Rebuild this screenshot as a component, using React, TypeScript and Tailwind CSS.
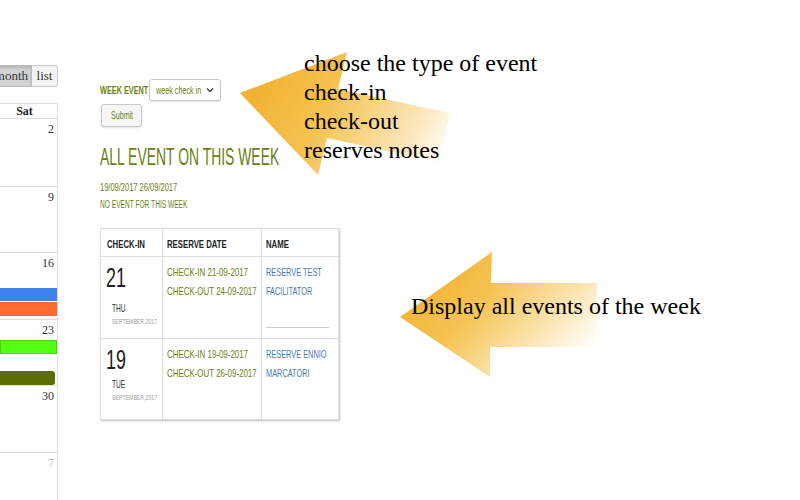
import React from "react";

function Sq({ w, s, children }: { w: string; s: string; children: React.ReactNode }) {
  return (
    <span className={`inline-block whitespace-nowrap ${w}`}>
      <span className={`inline-block origin-left ${s}`}>{children}</span>
    </span>
  );
}

function CalendarColumn() {
  const rows = [
    { n: "2", h: "h-[68px]" },
    { n: "9", h: "h-[66px]" },
    { n: "16", h: "h-[67px]" },
    { n: "23", h: "h-[66px]" },
    { n: "30", h: "h-[67px]" },
    { n: "7", h: "h-[67px]", muted: true },
  ];
  return (
    <div className="w-[58px] shrink-0 flex flex-col pt-[65px] font-['Liberation_Serif',serif]">
      <div className="flex h-[22px] -ml-[4px] text-[13px] text-[#333]">
        <div className="w-[36px] bg-[#d3d3d3] border border-[#bbb] flex items-center justify-end pr-[3px] shadow-[inset_0_2px_3px_rgba(0,0,0,0.15)]">month</div>
        <div className="w-[26px] bg-[#f3f3f3] border border-[#ccc] border-l-0 rounded-r-[3px] flex items-center justify-center">list</div>
      </div>
      <div className="mt-[16px] flex-1 border-r border-t border-[#ddd] flex flex-col">
        <div className="h-[15px] border-b border-[#ddd] text-[12px] font-bold text-[#222] flex items-center justify-center pr-[8px]">Sat</div>
        {rows.map((r, i) => (
          <div key={i} className={`${r.h} shrink-0 border-b border-[#ddd] flex flex-col`}>
            <div className={`text-right pr-[3px] pt-[3px] text-[12px] leading-[14px] ${r.muted ? "text-[#bbb]" : "text-[#333]"}`}>{r.n}</div>
            {i === 2 && (
              <div className="mt-[18px] flex flex-col gap-[1px]">
                <div className="h-[13px] bg-[#3f82ec]" />
                <div className="h-[14px] bg-[#ff6a30]" />
              </div>
            )}
            {i === 3 && (
              <div className="mt-[3px] flex flex-col">
                <div className="h-[14px] bg-[#52ff12] border border-[#49d40f]" />
                <div className="h-[17px]" />
                <div className="h-[14px] mr-[2px] bg-[#5a6f00] rounded-r-[3px]" />
              </div>
            )}
          </div>
        ))}
      </div>
    </div>
  );
}

function MiddlePanel() {
  const green = "text-[#6a7f12]";
  const rows = [
    { d: "21", w: "THU", ci: "21-09-2017", co: "24-09-2017", n1: "RESERVE TEST", n2: "FACILITATOR", h: "h-[82px]", line: true, wm: "mt-[10px]" },
    { d: "19", w: "TUE", ci: "19-09-2017", co: "26-09-2017", n1: "RESERVE ENNIO", n2: "MARCATORI", h: "h-[80px]", line: false, wm: "mt-[4px]" },
  ];
  return (
    <div className="ml-[42px] pt-[79px] flex flex-col font-['Liberation_Sans',sans-serif]">
      <div className="flex items-center gap-[1px]">
        <span className={`text-[10px] font-bold ${green}`}>
          <Sq w="w-[48px]" s="scale-x-[0.73]">WEEK EVENT</Sq>
        </span>
        <div className="w-[72px] h-[22px] border border-[#c8c8c8] rounded-[3px] shadow-[0_1px_2px_rgba(0,0,0,0.12)] flex items-center justify-between pl-[6px] pr-[6px]">
          <span className={`text-[10px] ${green}`}>
            <Sq w="w-[46px]" s="scale-x-[0.72]">week check in</Sq>
          </span>
          <svg width="8" height="6" viewBox="0 0 8 6"><path d="M1 1.5 L4 4.5 L7 1.5" fill="none" stroke="#444" strokeWidth="1.4" /></svg>
        </div>
      </div>
      <div className="mt-[3px] w-[41px] h-[23px] ml-[1px] border border-[#c8c8c8] rounded-[3px] bg-[#f6f6f6] shadow-[0_1px_2px_rgba(0,0,0,0.12)] flex items-center justify-center">
        <span className={`text-[10px] ${green}`}>
          <Sq w="w-[22px]" s="scale-x-[0.71]">Submit</Sq>
        </span>
      </div>
      <h1 className={`mt-[17px] text-[24px] leading-[26px] ${green}`}>
        <Sq w="w-[181px]" s="scale-x-[0.58]">ALL EVENT ON THIS WEEK</Sq>
      </h1>
      <div className={`mt-[9px] text-[10px] leading-[17px] ${green}`}>
        <div><Sq w="w-[77px]" s="scale-x-[0.75]">19/09/2017 26/09/2017</Sq></div>
        <div><Sq w="w-[88px]" s="scale-x-[0.66]">NO EVENT FOR THIS WEEK</Sq></div>
      </div>
      <div className="mt-[15px] w-[239px] border border-[#ddd] shadow-[1px_1px_2px_rgba(0,0,0,0.25)] flex flex-col">
        <div className="h-[28px] grid grid-cols-[62px_99px_1fr] border-b border-[#ddd] text-[10.5px] font-bold text-[#222]">
          <div className="pl-[6px] pt-[4px] flex items-center border-r border-[#ddd]"><Sq w="w-[38px]" s="scale-x-[0.74]">CHECK-IN</Sq></div>
          <div className="pl-[4px] pt-[4px] flex items-center border-r border-[#ddd]"><Sq w="w-[58px]" s="scale-x-[0.74]">RESERVE DATE</Sq></div>
          <div className="pl-[4px] pt-[4px] flex items-center"><Sq w="w-[24px]" s="scale-x-[0.74]">NAME</Sq></div>
        </div>
        {rows.map((r, i) => (
          <div key={i} className={`${r.h} grid grid-cols-[62px_99px_1fr] ${i === 0 ? "border-b border-[#ddd]" : ""}`}>
            <div className="border-r border-[#ddd] pl-[5px] pt-[7px] flex flex-col">
              <span className="text-[28px] leading-[28px] text-[#222]"><Sq w="w-[21px]" s="scale-x-[0.64]">{r.d}</Sq></span>
              <span className={`pl-[6px] ${r.wm} text-[11px] leading-[12px] text-[#333]`}><Sq w="w-[13px]" s="scale-x-[0.6]">{r.w}</Sq></span>
              <span className="pl-[6px] mt-[4px] text-[6.5px] leading-[8px] text-[#999]"><Sq w="w-[47px]" s="scale-x-[0.8]">SEPTEMBER,2017</Sq></span>
            </div>
            <div className={`border-r border-[#ddd] pl-[4px] pt-[6px] text-[11px] leading-[19px] ${green}`}>
              <div><Sq w="w-[81px]" s="scale-x-[0.72]">CHECK-IN {r.ci}</Sq></div>
              <div><Sq w="w-[89px]" s="scale-x-[0.72]">CHECK-OUT {r.co}</Sq></div>
            </div>
            <div className="pl-[4px] pt-[6px] flex flex-col text-[11px] leading-[19px] text-[#4a78b5]">
              <div><Sq w="w-[60px]" s="scale-x-[0.67]">{r.n1}</Sq></div>
              <div><Sq w="w-[50px]" s="scale-x-[0.67]">{r.n2}</Sq></div>
              {r.line && <div className="mt-auto mb-[10px] w-[63px] border-b border-[#ccc]" />}
            </div>
          </div>
        ))}
      </div>
    </div>
  );
}

export default function App() {
  return (
    <div className="relative w-[800px] h-[500px] bg-white overflow-hidden flex">
      <CalendarColumn />
      <MiddlePanel />
      <svg className="absolute inset-0 pointer-events-none" width="800" height="500" viewBox="0 0 800 500">
        <defs>
          <linearGradient id="g1" gradientUnits="userSpaceOnUse" x1="260" y1="80" x2="440" y2="175">
            <stop offset="0" stopColor="#f2b232" />
            <stop offset="0.35" stopColor="#f5c251" />
            <stop offset="0.75" stopColor="#fbe3b2" />
            <stop offset="1" stopColor="#ffffff" />
          </linearGradient>
          <linearGradient id="g2" gradientUnits="userSpaceOnUse" x1="430" y1="265" x2="560" y2="385">
            <stop offset="0" stopColor="#f2b232" />
            <stop offset="0.35" stopColor="#f5c352" />
            <stop offset="0.75" stopColor="#fce8bd" />
            <stop offset="1" stopColor="#ffffff" />
          </linearGradient>
        </defs>
        <polygon points="240,93 347,52 338,89 450,113 439,162 327,138 318,175" fill="url(#g1)" />
        <polygon points="400,317 492,252 491,283 597,283 597,347 490,347 490,377" fill="url(#g2)" />
      </svg>
      <div className="absolute left-[304px] top-[49px] font-['Liberation_Serif',serif] text-[24px] leading-[29px] text-black">
        <div>choose the type of event</div>
        <div>check-in</div>
        <div>check-out</div>
        <div>reserves notes</div>
      </div>
      <div className="absolute left-[411px] top-[292px] font-['Liberation_Serif',serif] text-[24px] leading-[29px] text-black">
        Display all events of the week
      </div>
    </div>
  );
}
